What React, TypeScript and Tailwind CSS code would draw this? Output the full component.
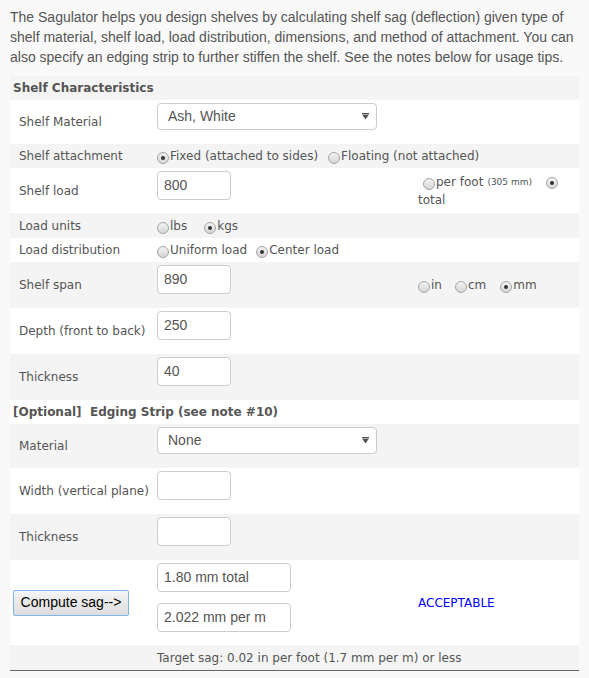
import React from "react";

function Radio({ checked, className = "" }: { checked?: boolean; className?: string }) {
  return (
    <span
      className={
        "relative inline-block w-[12px] h-[12px] shrink-0 rounded-full border border-[#a5a5a5] bg-linear-to-b from-[#f3f3f3] to-[#d6d6d6] " +
        className
      }
    >
      {checked && <span className="absolute left-[3px] top-[3px] w-[4px] h-[4px] rounded-full bg-[#333]" />}
    </span>
  );
}

function Field({ value = "", w = "w-[74px]" }: { value?: string; w?: string }) {
  return (
    <div
      className={
        "h-[29px] border border-[#cccccc] rounded-[4px] bg-white pl-[6px] flex items-center text-[14px] text-[#555] font-['Liberation_Sans',Arial,sans-serif] " +
        w
      }
    >
      {value}
    </div>
  );
}

function SelectBox({ value }: { value: string }) {
  return (
    <div className="w-[220px] h-[27px] border border-[#cccccc] rounded-[4px] bg-white flex items-center justify-between pl-[10px] pr-[7px] text-[14px] text-[#555] font-['Liberation_Sans',Arial,sans-serif]">
      <span>{value}</span>
      <svg width="7" height="7" viewBox="0 0 7 7">
        <rect x="0" y="0" width="7" height="1" fill="#555" />
        <polygon points="0,1.5 7,1.5 3.5,6.5" fill="#555" />
      </svg>
    </div>
  );
}

export default function App() {
  return (
    <div className="min-h-[678px] bg-[#f9f9f9] font-['Liberation_Sans',Arial,sans-serif] text-[#555]">
      <p className="px-[10px] pt-[7px] text-[14px] leading-[20px]">
        The Sagulator helps you design shelves by calculating shelf sag (deflection) given type of shelf material, shelf
        load, load distribution, dimensions, and method of attachment. You can also specify an edging strip to further
        stiffen the shelf. See the notes below for usage tips.
      </p>

      <div className="mx-[10px] mt-[9px] border-b border-[#666] font-['DejaVu_Sans',Verdana,sans-serif] text-[12px] text-[#555]">
        {/* Header */}
        <div className="h-[24px] bg-[#f4f4f4] flex items-center pl-[3px] font-bold">Shelf Characteristics</div>

        {/* Shelf Material */}
        <div className="h-[44px] bg-white flex items-center">
          <div className="w-[147px] shrink-0 pl-[9px]">Shelf Material</div>
          <div className="self-start mt-[3px]">
            <SelectBox value="Ash, White" />
          </div>
        </div>

        {/* Shelf attachment */}
        <div className="h-[24px] bg-[#f4f4f4] flex items-center">
          <div className="w-[147px] shrink-0 pl-[9px]">Shelf attachment</div>
          <div className="flex items-center">
            <Radio checked className="mt-[4px] mr-[1px]" />
            <span>Fixed (attached to sides)</span>
            <Radio className="mt-[4px] ml-[10px] mr-[1px]" />
            <span>Floating (not attached)</span>
          </div>
        </div>

        {/* Shelf load */}
        <div className="h-[45px] bg-white flex items-center">
          <div className="w-[147px] shrink-0 pl-[9px]">Shelf load</div>
          <div className="w-[261px] shrink-0 self-start mt-[3px]">
            <Field value="800" />
          </div>
          <div className="leading-[18px]">
            <div className="flex items-center">
              <Radio className="mt-[4px] ml-[5px] mr-[1px]" />
              <span>per foot</span>
              <span className="text-[9px] ml-[4px]">(305 mm)</span>
              <Radio checked className="mt-[2px] ml-[14px]" />
            </div>
            <div>total</div>
          </div>
        </div>

        {/* Load units */}
        <div className="h-[25px] bg-[#f4f4f4] flex items-center">
          <div className="w-[147px] shrink-0 pl-[9px]">Load units</div>
          <div className="flex items-center">
            <Radio className="mt-[4px] mr-[1px]" />
            <span>lbs</span>
            <Radio checked className="mt-[4px] ml-[17px] mr-[1px]" />
            <span>kgs</span>
          </div>
        </div>

        {/* Load distribution */}
        <div className="h-[24px] bg-white flex items-center">
          <div className="w-[147px] shrink-0 pl-[9px]">Load distribution</div>
          <div className="flex items-center">
            <Radio className="mt-[4px] mr-[1px]" />
            <span>Uniform load</span>
            <Radio checked className="mt-[4px] ml-[9px] mr-[1px]" />
            <span>Center load</span>
          </div>
        </div>

        {/* Shelf span */}
        <div className="h-[46px] bg-[#f4f4f4] flex items-center">
          <div className="w-[147px] shrink-0 pl-[9px]">Shelf span</div>
          <div className="w-[261px] shrink-0 self-start mt-[3px]">
            <Field value="890" />
          </div>
          <div className="flex items-center">
            <Radio className="mt-[4px] mr-[1px]" />
            <span>in</span>
            <Radio className="mt-[4px] ml-[13px] mr-[1px]" />
            <span>cm</span>
            <Radio checked className="mt-[4px] ml-[14px] mr-[1px]" />
            <span>mm</span>
          </div>
        </div>

        {/* Depth */}
        <div className="h-[46px] bg-white flex items-center">
          <div className="w-[147px] shrink-0 pl-[9px]">Depth (front to back)</div>
          <div className="self-start mt-[3px]">
            <Field value="250" />
          </div>
        </div>

        {/* Thickness */}
        <div className="h-[46px] bg-[#f4f4f4] flex items-center">
          <div className="w-[147px] shrink-0 pl-[9px]">Thickness</div>
          <div className="self-start mt-[3px]">
            <Field value="40" />
          </div>
        </div>

        {/* Optional header */}
        <div className="h-[24px] bg-white flex items-center pl-[3px] font-bold whitespace-pre">
          {"[Optional]  Edging Strip (see note #10)"}
        </div>

        {/* Material */}
        <div className="h-[44px] bg-[#f4f4f4] flex items-center">
          <div className="w-[147px] shrink-0 pl-[9px]">Material</div>
          <div className="self-start mt-[3px]">
            <SelectBox value="None" />
          </div>
        </div>

        {/* Width */}
        <div className="h-[46px] bg-white flex items-center">
          <div className="w-[147px] shrink-0 pl-[9px]">Width (vertical plane)</div>
          <div className="self-start mt-[3px]">
            <Field />
          </div>
        </div>

        {/* Thickness edging */}
        <div className="h-[46px] bg-[#f4f4f4] flex items-center">
          <div className="w-[147px] shrink-0 pl-[9px]">Thickness</div>
          <div className="self-start mt-[3px]">
            <Field />
          </div>
        </div>

        {/* Compute */}
        <div className="h-[85px] bg-white flex items-center">
          <div className="w-[147px] shrink-0 pl-[3px]">
            <button className="w-[116px] h-[26px] border border-[#7eb4ea] rounded-[2px] bg-linear-to-b from-[#f5f5f5] to-[#dcdcdc] text-[14px] text-black font-['Liberation_Sans',Arial,sans-serif]">
              {"Compute sag-->"}
            </button>
          </div>
          <div className="w-[261px] shrink-0 self-start mt-[3px] flex flex-col gap-[11px]">
            <Field value="1.80 mm total" w="w-[134px]" />
            <Field value="2.022 mm per m" w="w-[134px]" />
          </div>
          <div className="text-[#0000ff]">ACCEPTABLE</div>
        </div>

        {/* Target */}
        <div className="h-[25px] bg-[#f4f4f4] flex items-center">
          <div className="w-[147px] shrink-0" />
          <div>Target sag: 0.02 in per foot (1.7 mm per m) or less</div>
        </div>
      </div>
    </div>
  );
}
